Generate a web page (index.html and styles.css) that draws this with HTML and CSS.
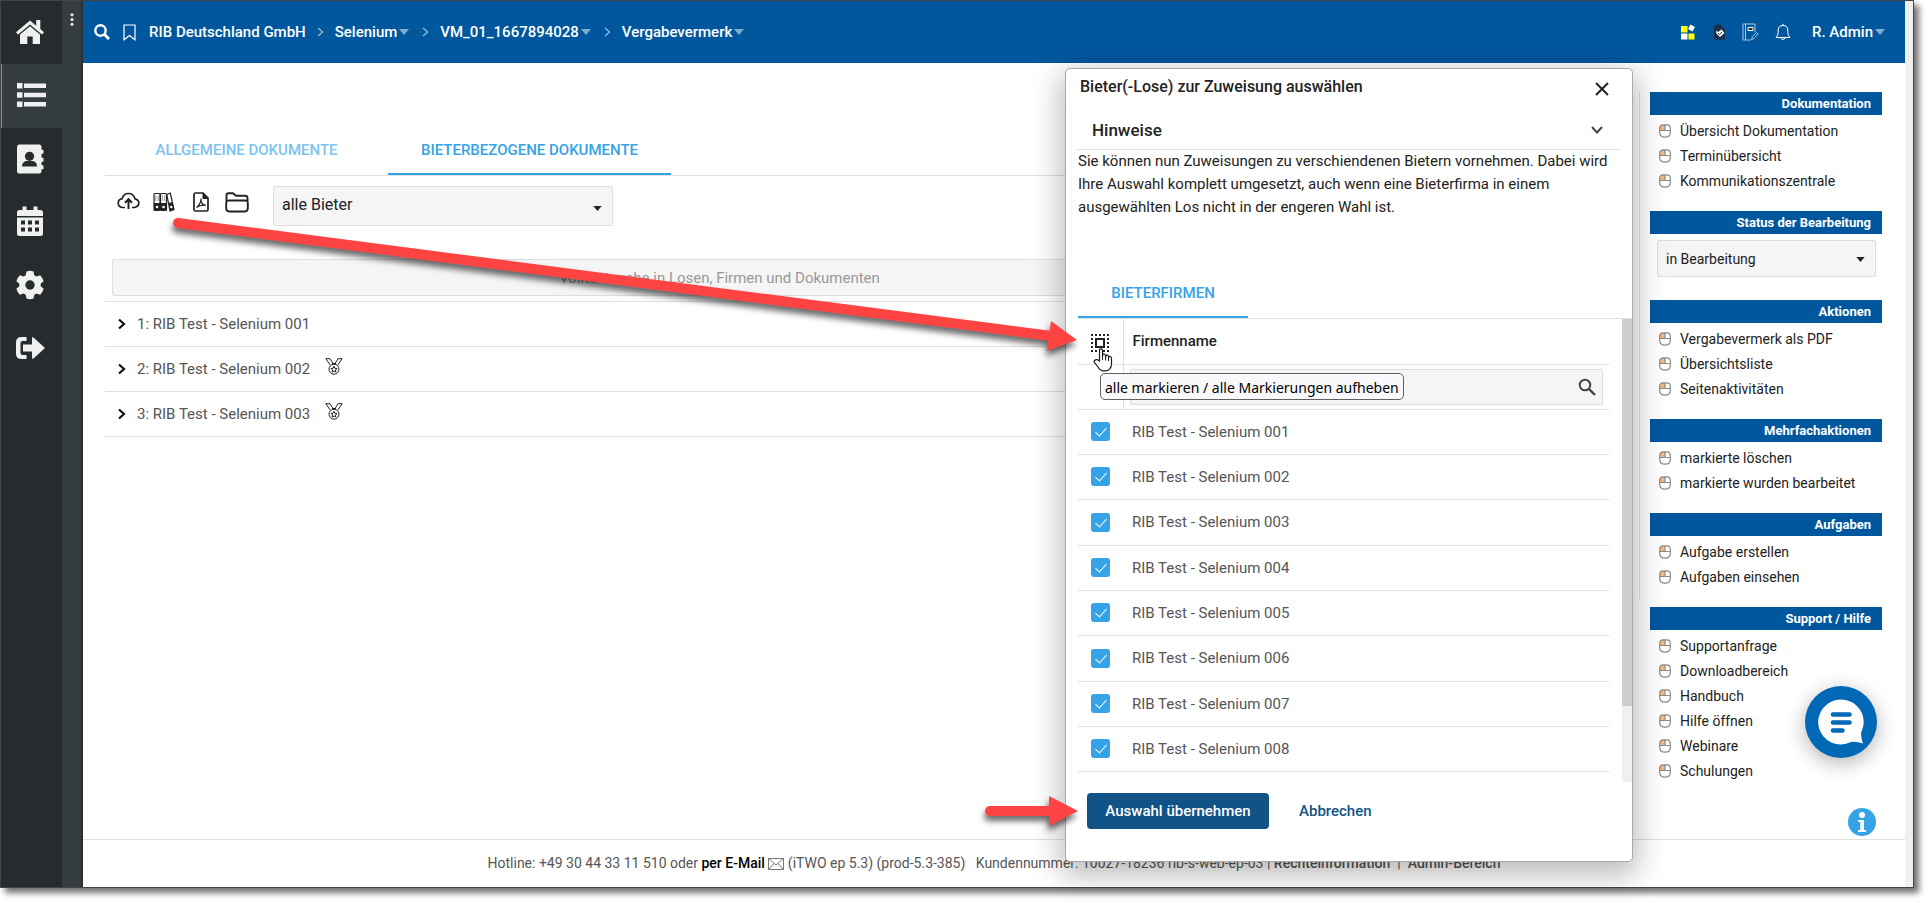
FILE: index.html
```html
<!DOCTYPE html>
<html lang="de">
<head>
<meta charset="utf-8">
<title>Vergabevermerk</title>
<link rel="stylesheet" href="styles.css">
</head>
<body>
<svg class="defs" aria-hidden="true">
  <symbol id="mouse" viewBox="0 0 12 14"><path d="M6 1H4.500Q1 1 1 4.500V6.500H6Z" fill="#fbb679"/><path d="M.7 4.500Q.7.8 4.400.8H7.600Q11.300.8 11.300 4.500V8.600Q11.300 13.200 6 13.200T.7 8.600ZM.7 6.500H11.300M6 1V6.500" fill="none" stroke="#8a8a8a" stroke-width="1.200"/></symbol>
  <symbol id="caret" viewBox="0 0 10 6"><path d="M0 0H10L5 6Z" fill="currentColor"/></symbol>
  <symbol id="chev" viewBox="0 0 8 12"><path d="M1 1.500L6 6L1 10.500" fill="none" stroke="currentColor" stroke-width="2.200"/></symbol>
  <symbol id="sep" viewBox="0 0 7 10"><path d="M1 1L5.500 5L1 9" fill="none" stroke="currentColor" stroke-width="1.500"/></symbol>
  <symbol id="medal" viewBox="0 0 18 17"><g fill="none" stroke="#222" stroke-width="1"><path d="M.8 .7H5L8.500 6.500M.8 .7L5.200 7M17.200 .7H13L9.500 6.500M17.200 .7L12.800 7M7 5.500H11"/><circle cx="9" cy="11.200" r="5"/><path d="M9 8.300L9.900 10.300L12 10.500L10.500 12L11 14L9 13L7 14L7.500 12L6 10.500L8.100 10.300Z"/></g></symbol>
</svg>
<div class="frame">
  <nav class="rail" aria-label="Hauptnavigation">
    <button class="rail-item" aria-label="Start"><svg viewBox="0 0 30 26" width="30" height="26"><path fill="#f0f0f0" d="M15 1.500L1 13.300L3 15.600L15 5.600L27 15.600L29 13.300L25.300 10.100V1H21.200V6.700Z"/><path fill="#f0f0f0" d="M15 7.300L5 15.600V25H12.300V17.500H17.700V25H25V15.600Z"/></svg></button>
    <button class="rail-item rail-active" aria-label="Liste"><svg viewBox="0 0 30 26" width="30" height="26"><path fill="#f0f0f0" d="M1 1H6.500V6.500H1ZM1 10.200H6.500V15.700H1ZM1 19.400H6.500V24.900H1ZM8 1.600H30V6H8ZM8 10.800H30V15.200H8ZM8 20H30V24.400H8Z"/></svg></button>
    <button class="rail-item" aria-label="Kontakte"><svg viewBox="0 0 28 30" width="28" height="30"><path fill="#f0f0f0" d="M3 .5H23Q25.500.5 25.500 3V5.500L27.500 6V9.500L25.500 10V13.500L27.500 14V17.500L25.500 18V21L27.500 21.500V25L25.500 25.500V27Q25.500 29.500 23 29.500H3Q1 29.500 1 27V3Q1 .5 3 .5Z"/><circle cx="13.500" cy="12.300" r="4.600" fill="#262b2d"/><path fill="#262b2d" d="M6 22.500Q6 17.500 10.500 17H16.500Q21 17.500 21 22.500Z"/></svg></button>
    <button class="rail-item" aria-label="Kalender"><svg viewBox="0 0 28 31" width="28" height="31"><path fill="#f0f0f0" d="M1 10V6.500Q1 4 3.500 4H6.500V.5H10.500V4H17.500V.5H21.500V4H24.500Q27 4 27 6.500V10ZM1 11.500H27V27.500Q27 30 24.500 30H3.500Q1 30 1 27.500Z"/><path fill="#262b2d" d="M5 14.500h4v4h-4zM12 14.500h4v4h-4zM19 14.500h4v4h-4zM5 21.500h4v4h-4zM12 21.500h4v4h-4zM19 21.500h4v4h-4z"/></svg></button>
    <button class="rail-item" aria-label="Einstellungen"><svg viewBox="0 0 30 30" width="30" height="30"><path fill="#f0f0f0" d="M11.500 1.500Q15 .2 18.500 1.500L19.300 5.300L21.500 6.500L25.200 5.200Q27.800 7.800 28.600 11.200L25.700 13.800V16.300L28.600 18.800Q27.800 22.200 25.200 24.800L21.500 23.500L19.300 24.800L18.500 28.500Q15 29.800 11.500 28.500L10.700 24.800L8.500 23.500L4.800 24.800Q2.200 22.200 1.400 18.800L4.300 16.300V13.800L1.400 11.200Q2.200 7.800 4.800 5.200L8.500 6.500L10.700 5.300Z"/><circle cx="15" cy="15" r="4.700" fill="#262b2d"/></svg></button>
    <button class="rail-item" aria-label="Abmelden"><svg viewBox="0 0 30 24" width="30" height="24"><path fill="#f0f0f0" d="M11.500 1V5H7.500Q5.500 5 5.500 7V17Q5.500 19 7.500 19H11.500V23H6.500Q1 23 1 17.500V6.500Q1 1 6.500 1Z"/><path fill="#f0f0f0" d="M8 8.500H17V1.500Q18 1 19 2L30 12L19 22Q18 23 17 22.500V15.500H8Z"/></svg></button>
  </nav>
  <div class="strip"><button class="dots" aria-label="Menü"><svg viewBox="0 0 4 13" width="4" height="13" fill="#f0f0f0"><circle cx="2" cy="1.800" r="1.500"/><circle cx="2" cy="6.500" r="1.500"/><circle cx="2" cy="11.200" r="1.500"/></svg></button></div>

  <div class="page">
    <header class="topbar">
      <button class="ic search" aria-label="Suche"><svg viewBox="0 0 16 16" width="16" height="16" fill="none" stroke="#fff"><circle cx="6.500" cy="6.500" r="5.200" stroke-width="2.400"/><path d="M10.300 10.300L15 15" stroke-width="3"/></svg></button>
      <button class="ic mark" aria-label="Lesezeichen"><svg viewBox="0 0 13 17" width="13" height="17"><path d="M1 1H12V15.800L6.500 11.500L1 15.800Z" fill="none" stroke="#fff" stroke-width="1.200"/></svg></button>
      <nav class="crumbs" aria-label="Pfad">
        <a href="#">RIB Deutschland GmbH</a><svg class="sep"><use href="#sep"/></svg>
        <a href="#">Selenium<svg class="cr"><use href="#caret"/></svg></a><svg class="sep"><use href="#sep"/></svg>
        <a href="#">VM_01_1667894028<svg class="cr"><use href="#caret"/></svg></a><svg class="sep"><use href="#sep"/></svg>
        <a href="#">Vergabevermerk<svg class="cr"><use href="#caret"/></svg></a>
      </nav>
      <div class="tools">
        <button class="ic" aria-label="Kacheln"><svg viewBox="0 0 16 16" width="16" height="16"><path fill="#ff0" d="M1 2H7.500V8.500H1ZM8.500 9.500H14.500V15.500H8.500Z"/><path fill="#fff" d="M1 9.500H7.500V15.500H1ZM10.500.5L15 3L12.500 7.500L8 5Z"/></svg></button>
        <button class="ic" aria-label="Aufgaben"><svg viewBox="0 0 14 16" width="14" height="16"><path fill="#1c2f45" d="M2 2H4L5 .5H9L10 2L13 6V15.500H2Z"/><path fill="#fff" d="M4 6.500L6 8L9.500 5.500L12.500 9L8 13L4.500 9.500Z"/><path d="M6 9L7.500 10.500L10 8" fill="none" stroke="#1c2f45"/></svg></button>
        <button class="ic" aria-label="Notizen"><svg viewBox="0 0 17 18" width="17" height="18" fill="none" stroke="#a9c8e2"><path d="M13 9V1H1V17H9M3.500 1V17"/><path d="M6 4.500H11V7.500H6Z" stroke="#fff" fill="#1c2f45"/><path d="M9.500 16.500L10.500 13.500L14.500 9.500L16 11L12 15.500Z"/></svg></button>
        <button class="ic" aria-label="Benachrichtigungen"><svg viewBox="0 0 16 18" width="16" height="18" fill="none" stroke="#fff"><path d="M1 14.500H15Q12.800 12.500 12.800 9.500V7Q12.500 2.500 8 2.500T3.200 7V9.500Q3.200 12.500 1 14.500ZM8 2.500V.8M6 14.500Q6.200 16.500 8 16.500T10 14.500"/></svg></button>
        <button class="user">R. Admin<svg class="cr"><use href="#caret"/></svg></button>
      </div>
    </header>

    <div class="columns">
      <main class="main">
        <div class="tabs">
          <button class="tab tab-dim">ALLGEMEINE DOKUMENTE</button>
          <button class="tab tab-on">BIETERBEZOGENE DOKUMENTE</button>
        </div>
        <div class="toolbar">
          <button class="ic" aria-label="Hochladen"><svg viewBox="0 0 23 18" width="23" height="18" fill="none" stroke="#222" stroke-width="1.700"><path d="M8 15.500H5.500Q1.200 15 1.200 11T5 6.800Q6.500 1.500 11.500 1.500T18 6.800Q21.800 7.500 21.800 11T17.500 15.500H15"/><path d="M11.500 17V7.500M8 10.800L11.500 7.200L15 10.800" stroke-width="2"/></svg></button>
          <button class="ic" aria-label="Zuweisen"><svg viewBox="0 0 22 20" width="22" height="20" fill="none" stroke="#222" stroke-width="1.200"><rect x="1" y="1.500" width="6" height="17" rx="1"/><rect x="7.500" y="1.500" width="6" height="17" rx="1"/><path d="M13.800 2.500L17.300 1L21 17.500L17 19Z"/><path d="M2.800 3.500V9M5.200 3.500V9M9.300 3.500V9M11.700 3.500V9" stroke="#999" stroke-width="1"/><path fill="#222" stroke="none" d="M1 11H7V18.500H1ZM7.500 11H13.500V18.500H7.500ZM15.700 11L19.700 10L21 17.500L17 19Z"/><circle cx="4" cy="15" r="1.300" fill="#fff" stroke="none"/><circle cx="10.500" cy="15" r="1.300" fill="#fff" stroke="none"/><circle cx="18.300" cy="15" r="1.200" fill="#fff" stroke="none"/></svg></button>
          <button class="ic pdf" aria-label="PDF"><svg viewBox="0 0 16 20" width="16" height="20" fill="none" stroke="#222"><path stroke-width="1.700" d="M2.500 1H10L15 6V17.500Q15 19 13.500 19H2.500Q1 19 1 17.500V2.500Q1 1 2.500 1Z"/><path fill="#222" d="M10 1L15 6.500H10Z"/><path stroke-width="1.200" d="M3.500 15.500Q8 12 8 6.500Q7.500 12.500 12.800 13.300Q8 12.300 3.500 15.500Z"/></svg></button>
          <button class="ic" aria-label="Ordner"><svg viewBox="0 0 24 21" width="24" height="21" fill="none" stroke="#222" stroke-width="1.900"><path d="M1.500 9V3.500Q1.500 1.200 3.500 1.200H8L11 3.800H20Q22.500 3.800 22.500 6V9M4 8.500H20Q23 8.500 22.800 11V16.500Q22.500 19.500 20 19.500H4Q1.500 19.500 1.200 16.500V11Q1 8.500 4 8.500Z"/></svg></button>
          <div class="select select-main"><select aria-label="Bieter"><option>alle Bieter</option></select><svg class="arrow"><use href="#caret"/></svg></div>
        </div>
        <input class="fulltext" type="text" aria-label="Volltextsuche" placeholder="Volltextsuche in Losen, Firmen und Dokumenten">
        <ul class="bidders">
          <li><svg class="chev"><use href="#chev"/></svg><span>1: RIB Test - Selenium 001</span></li>
          <li><svg class="chev"><use href="#chev"/></svg><span>2: RIB Test - Selenium 002</span><svg class="medal"><use href="#medal"/></svg></li>
          <li><svg class="chev"><use href="#chev"/></svg><span>3: RIB Test - Selenium 003</span><svg class="medal"><use href="#medal"/></svg></li>
        </ul>
      </main>

      <aside class="side">
        <section class="box"><h2>Dokumentation</h2><ul>
          <li><a href="#"><svg class="ms"><use href="#mouse"/></svg>Übersicht Dokumentation</a></li>
          <li><a href="#"><svg class="ms"><use href="#mouse"/></svg>Terminübersicht</a></li>
          <li><a href="#"><svg class="ms"><use href="#mouse"/></svg>Kommunikationszentrale</a></li></ul></section>
        <section class="box"><h2>Status der Bearbeitung</h2>
          <div class="select select-side"><select aria-label="Status der Bearbeitung"><option>in Bearbeitung</option></select><svg class="arrow"><use href="#caret"/></svg></div></section>
        <section class="box"><h2>Aktionen</h2><ul>
          <li><a href="#"><svg class="ms"><use href="#mouse"/></svg>Vergabevermerk als PDF</a></li>
          <li><a href="#"><svg class="ms"><use href="#mouse"/></svg>Übersichtsliste</a></li>
          <li><a href="#"><svg class="ms"><use href="#mouse"/></svg>Seitenaktivitäten</a></li></ul></section>
        <section class="box"><h2>Mehrfachaktionen</h2><ul>
          <li><a href="#"><svg class="ms"><use href="#mouse"/></svg>markierte löschen</a></li>
          <li><a href="#"><svg class="ms"><use href="#mouse"/></svg>markierte wurden bearbeitet</a></li></ul></section>
        <section class="box"><h2>Aufgaben</h2><ul>
          <li><a href="#"><svg class="ms"><use href="#mouse"/></svg>Aufgabe erstellen</a></li>
          <li><a href="#"><svg class="ms"><use href="#mouse"/></svg>Aufgaben einsehen</a></li></ul></section>
        <section class="box"><h2>Support / Hilfe</h2><ul>
          <li><a href="#"><svg class="ms"><use href="#mouse"/></svg>Supportanfrage</a></li>
          <li><a href="#"><svg class="ms"><use href="#mouse"/></svg>Downloadbereich</a></li>
          <li><a href="#"><svg class="ms"><use href="#mouse"/></svg>Handbuch</a></li>
          <li><a href="#"><svg class="ms"><use href="#mouse"/></svg>Hilfe öffnen</a></li>
          <li><a href="#"><svg class="ms"><use href="#mouse"/></svg>Webinare</a></li>
          <li><a href="#"><svg class="ms"><use href="#mouse"/></svg>Schulungen</a></li></ul></section>
      </aside>
    </div>

    <footer class="foot">
      <p>Hotline: +49 30 44 33 11 510 oder <a class="mail" href="#">per E-Mail <svg viewBox="0 0 16 12" width="16" height="12" fill="none" stroke="#777"><path d="M.5.5H15.500V11.500H.5ZM.5.5L8 7L15.500.5M.5 11.500L6 5.500M15.500 11.500L10 5.500"/></svg></a> (iTWO ep 5.3) (prod-5.3-385) &nbsp; Kundennummer: 10027-18236 rib-s-web-ep-03 | <a href="#">Rechteinformation</a> &nbsp;|&nbsp; <a href="#">Admin-Bereich</a></p>
    </footer>
  </div>
  <div class="pagebar"></div>

  <section class="dialog" role="dialog" aria-labelledby="dlg-title">
    <div class="dlg-head">
      <h1 id="dlg-title">Bieter(-Lose) zur Zuweisung auswählen</h1>
      <button class="ic" aria-label="Schließen"><svg viewBox="0 0 14 14" width="14" height="14"><path d="M1 1L13 13M13 1L1 13" stroke="#222" stroke-width="2"/></svg></button>
    </div>
    <button class="hint"><span>Hinweise</span><svg viewBox="0 0 12 8" width="12" height="8"><path d="M1 1L6 6.500L11 1" fill="none" stroke="#444" stroke-width="2"/></svg></button>
    <p class="hint-text">Sie können nun Zuweisungen zu verschiendenen Bietern vornehmen. Dabei wird Ihre Auswahl komplett umgesetzt, auch wenn eine Bieterfirma in einem ausgewählten Los nicht in der engeren Wahl ist.</p>
    <div class="dlg-tabs"><button class="dlg-tab">BIETERFIRMEN</button></div>
    <div class="scroll">
      <table class="firms">
        <thead>
          <tr><th class="c1"><button class="ic" aria-label="alle markieren / alle Markierungen aufheben"><svg viewBox="0 0 18 18" width="18" height="18" fill="none" stroke="#222" stroke-width="2"><path stroke-dasharray="2 2" d="M0 1H18M0 17H18M1 4V16M17 4V16"/><rect x="5" y="5" width="8" height="8"/></svg></button></th><th class="c2">Firmenname</th></tr>
          <tr><td class="c1"></td><td class="cf"><div class="filter"><input type="text" aria-label="Firmenname filtern"><svg viewBox="0 0 18 18" width="18" height="18" fill="none" stroke="#444"><circle cx="7" cy="7" r="5.300" stroke-width="2"/><path d="M11 11L17 17" stroke-width="2.400"/></svg></div></td></tr>
        </thead>
        <tbody>
          <tr><td class="c1"><input type="checkbox" id="f1" checked></td><td class="c2"><label for="f1">RIB Test - Selenium 001</label></td></tr>
          <tr><td class="c1"><input type="checkbox" id="f2" checked></td><td class="c2"><label for="f2">RIB Test - Selenium 002</label></td></tr>
          <tr><td class="c1"><input type="checkbox" id="f3" checked></td><td class="c2"><label for="f3">RIB Test - Selenium 003</label></td></tr>
          <tr><td class="c1"><input type="checkbox" id="f4" checked></td><td class="c2"><label for="f4">RIB Test - Selenium 004</label></td></tr>
          <tr><td class="c1"><input type="checkbox" id="f5" checked></td><td class="c2"><label for="f5">RIB Test - Selenium 005</label></td></tr>
          <tr><td class="c1"><input type="checkbox" id="f6" checked></td><td class="c2"><label for="f6">RIB Test - Selenium 006</label></td></tr>
          <tr><td class="c1"><input type="checkbox" id="f7" checked></td><td class="c2"><label for="f7">RIB Test - Selenium 007</label></td></tr>
          <tr><td class="c1"><input type="checkbox" id="f8" checked></td><td class="c2"><label for="f8">RIB Test - Selenium 008</label></td></tr>
        </tbody>
      </table>
      <div class="track"><div class="thumb"></div></div>
    </div>
    <div class="dlg-foot"><button class="primary">Auswahl übernehmen</button><button class="plain">Abbrechen</button></div>
  </section>

  <button class="chat" aria-label="Chat"><svg viewBox="0 0 46 46" width="46" height="46"><path fill="#fff" d="M23 .5A22.500 22.500 0 1 0 33 43Q38 42 45 44.500Q42.500 38 43.300 33A22.500 22.500 0 0 0 23 .5Z"/><path d="M15 15.500H31.500M15 23.500H31.500M15 31.500H24.500" stroke="#0068b4" stroke-width="4.500" stroke-linecap="round"/></svg></button>
  <button class="info" aria-label="Information"><svg viewBox="0 0 28 28" width="28" height="28"><circle cx="14" cy="14" r="14" fill="#36a3e6"/><circle cx="14" cy="7" r="3" fill="#fff"/><path fill="#fff" d="M10 12H16V22H18V24H10V22H12.300V14H10Z"/></svg></button>

  <div class="tip" role="tooltip">alle markieren / alle Markierungen aufheben</div>
  <svg class="overlay" aria-hidden="true">
    <g class="pointer" transform="translate(1093 348)"><path fill="#fff" stroke="#1a1a1a" stroke-width="1.200" stroke-linejoin="round" d="M6.500 13V2.500Q6.500.8 8 .8T9.500 2.500V8.500Q9.800 5.500 11.300 6T12.600 9Q13 6.500 14.400 7T15.500 9.800Q16 8 17.300 8.500T18.500 10.500V15Q18.500 22.800 12.500 22.800H10Q7 22.800 5 19L1.200 14.200Q1 12 3 11.600T6.500 13Z"/><path d="M9.500 8.500V12M12.600 9V12.500M15.500 9.800V13" stroke="#1a1a1a"/></g>
    <g class="arrows">
      <path d="M178 223L1052 336" stroke="#fe4343" stroke-width="10" stroke-linecap="round"/>
      <path fill="#fe4343" d="M1051 321L1077 340L1047 351Z"/>
      <path d="M990 811H1052" stroke="#fe4343" stroke-width="10" stroke-linecap="round"/>
      <path fill="#fe4343" d="M1049 796L1078 811L1049 826Z"/>
    </g>
  </svg>
</div>
</body>
</html>
```
FILE: styles.css
```css
* { box-sizing: border-box; }
html, body { margin: 0; background: #fff; }
body { font-family: Roboto, "Liberation Sans", sans-serif; font-size: 15px; color: #222; }
button, input, select { font: inherit; color: inherit; margin: 0; padding: 0; border: 0; background: none; }
a { color: inherit; text-decoration: none; }
ul, h1, h2, p { margin: 0; padding: 0; list-style: none; }
svg { display: block; flex: none; }
.defs { position: absolute; width: 0; height: 0; }
.ic { display: flex; align-items: center; justify-content: center; }

.frame {
  position: relative; display: flex;
  min-height: calc(100vh - 15px); margin: 0 15px 15px 0;
  border: 1px solid #444; background: #fff;
  box-shadow: 5px 5px 6px rgba(0, 0, 0, .55);
}
.rail { width: 61px; background: #262b2d; display: flex; flex-direction: column; }
.rail-item { height: 63px; display: flex; align-items: center; justify-content: center; padding: 0 3px 2px 0; }
.rail-active { background: #363d40; border-left: 1px solid #36a3e6; height: 64px; }
.strip { width: 21px; background: #363d40; border-right: 2px solid #2a3033; }
.dots { display: flex; width: 100%; justify-content: center; padding-top: 12px; }

.page { flex: 1; display: flex; flex-direction: column; min-width: 0; }
.pagebar { width: 8px; background: #f0f0f0; }
.topbar { height: 62px; background: #00579d; color: #fff; display: flex; align-items: center; padding: 0 20px 0 11px; font-weight: 500; }
.mark { margin-left: 13px; }
.crumbs { display: flex; align-items: center; margin-left: 13px; }
.crumbs a, .user { display: flex; align-items: center; }
.cr { width: 10px; height: 6px; margin-left: 2px; color: #7fabce; }
.sep { width: 7px; height: 10px; margin: 0 11px; color: #8fb5d4; }
.crumbs a ~ a + .sep { margin-left: 13px; }
.tools { margin-left: auto; display: flex; align-items: center; gap: 16px; }
.user { margin-left: 5px; }

.columns { flex: 1; display: flex; }
.main { flex: 1; margin: 28px 0 auto; padding: 29px 305px 0 22px; height: 508px; border-right: 1px solid #e8e8e8; }
.tabs { display: flex; height: 56px; border-bottom: 1px solid #e0e0e0; }
.tab { width: 283px; padding-top: 4px; font-weight: 500; color: #36a3e6; }
.tab-dim { color: #7cc3f0; }
.tab-on { border-bottom: 2px solid #36a3e6; padding-top: 6px; }
.toolbar { display: flex; align-items: flex-start; padding: 16px 0 0 12px; gap: 13px; }
.pdf { margin: 0 3px 0 5px; }
.select { position: relative; }
.select select { width: 100%; height: 100%; appearance: none; border: 1px solid #ddd; border-radius: 2px; background: #f5f5f5; padding: 0 8px; }
.arrow { position: absolute; right: 11px; top: 50%; width: 9px; height: 5px; }
.select-main { width: 340px; height: 40px; margin: -6px 0 0 11px; font-size: 16px; }
.select-main select { padding-bottom: 3px; }
.fulltext { display: block; width: calc(100% - 14px); height: 37px; margin: 33px 7px 5px; text-align: center; background: #f5f5f5; border: 1px solid #ddd; border-radius: 2px; }
.fulltext::placeholder { color: #999; opacity: 1; }
.bidders { border-top: 1px solid #e0e0e0; color: #555; }
.bidders li { display: flex; align-items: center; height: 45px; border-bottom: 1px solid #e0e0e0; padding-left: 13px; }
.chev { width: 8px; height: 12px; margin-right: 11px; color: #111; }
.medal { width: 18px; height: 17px; margin: 0 0 6px 15px; }

.side { width: 265px; padding: 29px 23px 0 10px; font-size: 14px; }
.box { margin-bottom: 18px; }
.box h2 { height: 23px; margin-bottom: 3px; padding: 0 11px; background: #00579d; color: #fff; font-size: 13px; font-weight: 700; line-height: 23px; text-align: right; }
.box li a { display: flex; align-items: center; height: 25px; padding-left: 9px; }
.ms { width: 12px; height: 14px; margin-right: 9px; }
.select-side { height: 37px; margin: 6px 6px 23px 7px; }
.select-side .arrow { margin-top: -2px; }
.foot { height: 48px; border-top: 1px solid #e0e0e0; display: flex; align-items: center; justify-content: center; color: #555; font-size: 14px; padding-bottom: 2px; }
.foot a { font-weight: 500; }
.foot .mail { color: #000; }
.foot svg { display: inline; vertical-align: -2px; }

.dialog {
  position: absolute; right: 280px; top: 67px; width: 568px; height: 794px;
  background: #fff; border: 1px solid #aaa; border-radius: 5px;
  box-shadow: 0 9px 30px 4px rgba(0, 0, 0, .28); display: flex; flex-direction: column;
}
.dlg-head { display: flex; align-items: center; justify-content: space-between; height: 38px; padding: 0 23px 0 14px; }
.dlg-head h1 { font-size: 16px; font-weight: 500; padding-bottom: 3px; }
.dlg-head .ic { padding-top: 2px; }
.hint { display: flex; align-items: center; justify-content: space-between; height: 43px; margin: 0 11px; padding: 4px 18px 0 15px; border-bottom: 1px solid #e0e0e0; font-size: 17px; font-weight: 500; }
.hint-text { margin: 0 11px 0 12px; line-height: 23px; }
.dlg-tabs { margin: 49px 0 0 12px; height: 51px; border-bottom: 1px solid #e0e0e0; display: flex; }
.dlg-tab { width: 170px; padding-top: 2px; color: #36a3e6; font-weight: 500; border-bottom: 2px solid #36a3e6; }
.scroll { display: flex; justify-content: space-between; height: 463px; padding-left: 12px; }
.track { width: 10px; background: #f0f0f0; }
.thumb { height: 387px; background: #cdcdcd; }
.firms { width: 531px; border-collapse: collapse; table-layout: fixed; align-self: flex-start; color: #555; }
.firms tr { height: 45px; border-bottom: 1px solid #e0e0e0; }
.firms tbody tr:nth-child(3n) { height: 46px; }
.firms td, .firms th { padding: 0; text-align: left; }
.firms .c1 { width: 45px; padding-left: 13px; }
.firms thead .c1 { border-right: 1px solid #e0e0e0; }
.firms th.c1 { padding-top: 4px; }
.firms .c2 { padding-left: 9px; }
.firms th { font-weight: 500; color: #222; }
.filter { display: flex; align-items: center; height: 36px; margin: 0 6px; border: 1px solid #ddd; border-radius: 2px; background: #f5f5f5; padding: 0 6px; }
.filter input { flex: 1; }
.firms input[type=checkbox] { appearance: none; display: block; position: relative; width: 19px; height: 19px; border-radius: 3px; background: #36a3e6; }
.firms input[type=checkbox]::before { content: ""; position: absolute; left: 7px; top: 3px; width: 5px; height: 10px; border: solid #fff; border-width: 0 1px 1px 0; transform: rotate(42deg); }
.dlg-foot { display: flex; padding: 11px 0 0 21px; gap: 30px; font-weight: 500; }
.primary { height: 36px; width: 182px; background: #115387; color: #fff; border-radius: 4px; }
.plain { color: #115387; }

.chat { position: absolute; right: 36px; bottom: 129px; width: 72px; height: 72px; border-radius: 50%; background: #0068b4; display: flex; align-items: center; justify-content: center; box-shadow: 0 5px 20px rgba(0, 0, 0, .3); }
.info { position: absolute; right: 37px; bottom: 51px; }
.tip { position: absolute; left: 1099px; top: 372px; height: 27px; padding: 0 4px; border: 1px solid #5f5f5f; border-radius: 5px; background: #f9f9fc; color: #000; font: 14px/27px "Noto Sans", "Open Sans", sans-serif; white-space: nowrap; }
.overlay { position: absolute; left: -1px; top: -1px; width: 100%; height: 100%; pointer-events: none; }
.arrows { filter: drop-shadow(-1px 5px 3px rgba(0, 0, 0, .6)); }
```
